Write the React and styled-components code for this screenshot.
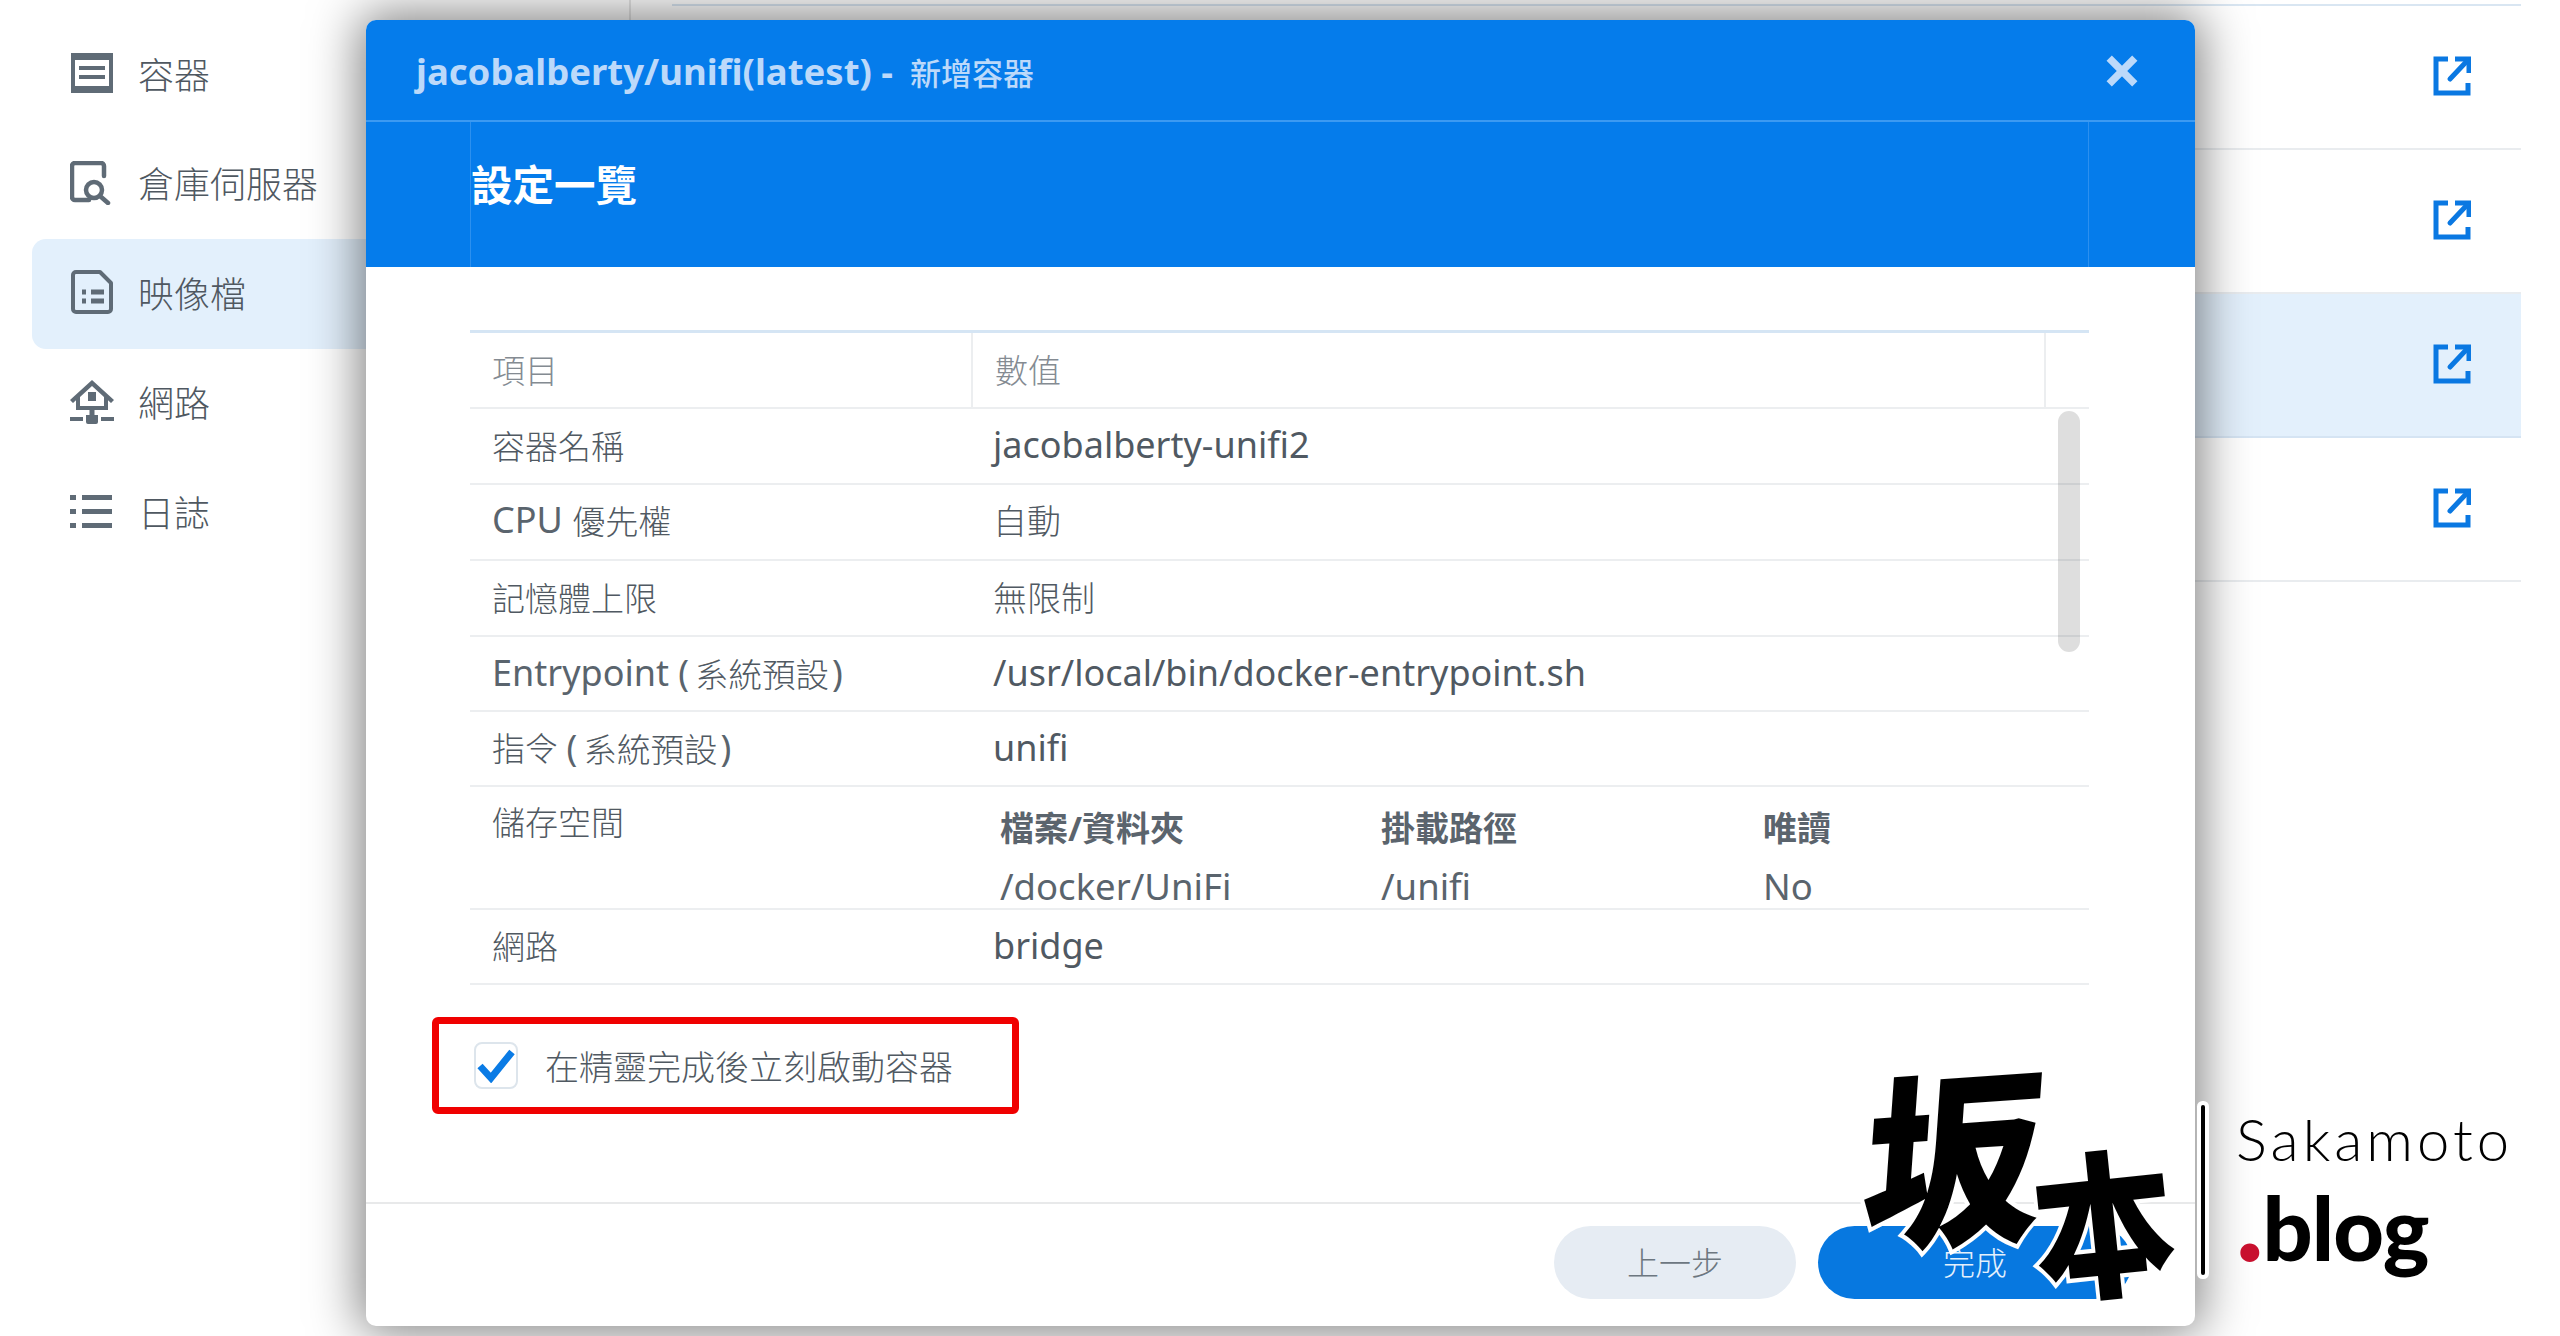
import React from 'react';
import styled, { createGlobalStyle } from 'styled-components';

const Global = createGlobalStyle`
  html, body { margin: 0; padding: 0; background: #fff; }
  body { font-family: "Noto Sans", "Noto Sans CJK TC", sans-serif; }
`;

const Page = styled.div`
  position: relative; width: 2521px; height: 1336px; overflow: hidden;
  display: flex; background: #fff; color: #606a74;
`;
const Side = styled.nav`
  width: 672px; flex: none; padding-top: 20px; box-sizing: border-box;
  display: flex; flex-direction: column;
`;
const NavItem = styled.div`
  width: 400px; height: 109.5px; margin-left: 32px; padding: 0 0 3px 38px; box-sizing: border-box;
  display: flex; align-items: center; gap: 24px;
  font-size: 36px; font-weight: 300; color: #4f5861; border-radius: 14px;
  background: ${p => (p.$active ? '#e3f0fc' : 'transparent')};
`;
const NavIcon = styled.svg`
  width: 44px; height: 44px; flex: none; fill: #5f6b76; stroke: #5f6b76;
`;
const Main = styled.main`
  position: relative; flex: 1; padding-top: 6px;
  &::before { content: ""; position: absolute; left: -43px; top: 0; width: 2px; height: 22px; background: #e6e6e6; }
`;
const ListTop = styled.div`height: 2px; margin-top: -2px; background: #d9e6f2;`;
const ListRow = styled.div`
  height: 144px; box-sizing: border-box; padding: 0 50px 3px 0;
  display: flex; align-items: center; justify-content: flex-end;
  border-bottom: 2px solid ${p => (p.$active ? '#d5e4f3' : '#e9ecef')};
  background: ${p => (p.$active ? '#e3f0fc' : 'transparent')};
`;
const LinkIcon = styled.svg`width: 38px; height: 40px; fill: none; stroke: #0a78e2; stroke-width: 5;`;

const Dialog = styled.section`
  position: absolute; left: 366px; top: 20px; width: 1829px; height: 1306px;
  display: flex; flex-direction: column; background: #fff; border-radius: 10px;
  box-shadow: 0 0 50px 6px rgba(0,0,0,.5);
`;
const TitleBar = styled.header`
  height: 102px; box-sizing: border-box; flex: none; padding: 2px 57px 0 50px;
  display: flex; align-items: center; justify-content: space-between;
  background: #057ceb; border-bottom: 2px solid #3c9af2; border-radius: 10px 10px 0 0;
  color: #bcd9fa; font-size: 36.500px; font-weight: 700;
`;
const DialogTitle = styled.div`display: flex; align-items: center; gap: 17px;`;
const TitleCjk = styled.span`font-size: 31px; font-weight: 500;`;
const Close = styled.svg`width: 32px; height: 32px; stroke: #bcd9fa; stroke-width: 7; fill: none;`;
const SubBar = styled.div`height: 145px; flex: none; padding: 0 106px 0 104px; background: #057ceb;`;
const SubInner = styled.div`
  height: 100%; padding: 0 0 24px 0; box-sizing: border-box; display: flex; align-items: center;
  border-left: 1px solid #2c90ef; border-right: 1px solid #2c90ef;
  color: #fff; font-size: 41.500px; font-weight: 700;
`;
const Body = styled.div`padding: 63px 106px 0 104px;`;
const Table = styled.div`position: relative; border-top: 3px solid #d5e5f4;`;
const Row = styled.div`
  display: flex; height: ${p => p.$h}px; box-sizing: border-box; border-bottom: 2px solid #eceef0;
  font-size: 34px; color: #505962;
`;
const Label = styled.div`
  width: 503px; flex: none; box-sizing: border-box; padding-left: 22px; display: flex;
  align-items: ${p => (p.$top ? 'flex-start' : 'center')};
  padding-top: ${p => (p.$top ? '10px' : '0')};
  padding-bottom: ${p => (p.$top ? 0 : p.$up || 3)}px;
  white-space: pre;
  font-size: 33px; font-weight: 300; color: #505962;
`;
const LatinPart = styled.span`font-size: 36px; font-weight: 400; color: #5a646d;`;
const CjkPart = styled.span`font-size: 33.500px; margin: 0 3px 0 6px;`;
const Value = styled.div`
  flex: 1; padding: 0 0 ${p => p.$up || 3}px 20px; display: flex; align-items: center;
  font-size: ${p => (p.$latin ? 36 : 34)}px; font-weight: ${p => (p.$latin ? 400 : 300)};
`;
const HeadLabel = styled(Label)`color: #848b92; border-right: 2px solid #eceef0;`;
const HeadValue = styled(Value)`
  flex: none; width: 1073px; box-sizing: border-box; padding-left: 22px;
  color: #848b92; font-size: 33px; border-right: 2px solid #eceef0;
`;
const Scroll = styled.div`
  position: absolute; right: 9px; top: 78px; width: 22px; height: 241px;
  border-radius: 11px; background: rgba(0,0,0,.13);
`;
const Sub = styled.div`
  flex: 1; padding: 10px 0 0 27px; display: grid; grid-template-columns: 381px 382px 1fr;
  grid-auto-rows: 59px; align-items: center;
`;
const SubHead = styled.div`font-size: 34px; font-weight: 700; color: #5b646d;`;
const SubCell = styled.div`font-size: 36.500px; color: #5a646d;`;
const Highlight = styled.div`
  width: 587px; height: 97px; box-sizing: border-box; margin: 32px 0 0 -38px; padding-left: 35px;
  display: flex; align-items: center; gap: 27px;
  border: 7px solid #f00000; border-radius: 6px; font-size: 34px; font-weight: 300; color: #505962;
`;
const Check = styled.div`
  width: 44px; height: 47px; box-sizing: border-box; border: 2px solid #dde5ec; border-radius: 8px;
  display: flex; align-items: center; justify-content: center; background: #fff;
`;
const Footer = styled.footer`
  margin-top: auto; height: 124px; box-sizing: border-box; padding: 22px 63px 0 0;
  display: flex; justify-content: flex-end; gap: 22px; border-top: 2px solid #e8e9ea;
`;
const Button = styled.div`
  width: ${p => p.$w}px; height: 73px; border-radius: 37px; padding-bottom: 3px; box-sizing: border-box;
  display: flex; align-items: center; justify-content: center; font-size: 32px; font-weight: 300;
  background: ${p => (p.$primary ? '#0778e0' : '#e6ecf3')};
  color: ${p => (p.$primary ? '#e3f0fc' : '#6d7780')};
`;

const Mark = styled.div`position: absolute; left: 1860px; top: 1060px; width: 660px; height: 250px; pointer-events: none;`;
const Brush = styled.span`
  position: absolute; left: ${p => p.$x}px; top: ${p => p.$y}px; font-size: ${p => p.$s}px; line-height: 1;
  font-family: "Noto Sans CJK TC", sans-serif; font-weight: 900; color: #000;
  -webkit-text-stroke: 8px #fff; paint-order: stroke fill; transform: ${p => p.$t};
`;
const Rule = styled.div`
  position: absolute; left: 341px; top: 45px; width: 4px; height: 170px; background: #000;
  border-radius: 2px; box-shadow: 0 0 0 4px #fff;
`;
const Saka = styled.div`
  position: absolute; left: 376px; top: 50px; font-family: "Lato", sans-serif; font-weight: 300;
  font-size: 58px; line-height: 1; letter-spacing: 4px; color: #000;
`;
const BlogText = styled.div`
  position: absolute; left: 376px; top: 123px; font-family: "Lato", sans-serif; font-weight: 900;
  font-size: 88px; line-height: 1; letter-spacing: -1px; color: #000;
`;
const Dot = styled.span`color: #c8102e; font-size: 116px; line-height: 0;`;

const rows = [
  { k: <>容器名稱</>, v: 'jacobalberty-unifi2', h: 76, latin: true },
  { k: <><LatinPart>CPU </LatinPart>優先權</>, v: '自動', h: 76, up: 5 },
  { k: <>記憶體上限</>, v: '無限制', h: 76 },
  { k: <><LatinPart>Entrypoint (</LatinPart><CjkPart>系統預設</CjkPart><LatinPart>)</LatinPart></>, v: '/usr/local/bin/docker-entrypoint.sh', h: 75, latin: true },
  { k: <>指令 <LatinPart>(</LatinPart><CjkPart>系統預設</CjkPart><LatinPart>)</LatinPart></>, v: 'unifi', h: 75, latin: true },
];

const ContainerIcon = () => (
  <NavIcon viewBox="0 0 44 44" strokeWidth="0">
    <path d="M1 2h42v7H1zM1 35h42v7H1zM1 9h4v26H1zM39 9h4v26h-4zM9 15h26v4H9zM9 24h26v4H9z" />
  </NavIcon>
);
const RegistryIcon = () => (
  <NavIcon viewBox="0 0 44 44" style={{ fill: 'none' }} strokeWidth="4.5" strokeLinecap="round">
    <path d="M19 39H5a3 3 0 0 1-3-3V5a3 3 0 0 1 3-3h26a3 3 0 0 1 3 3v10" />
    <circle cx="24" cy="29" r="8" />
    <path d="M30 35l8 7" />
  </NavIcon>
);
const ImageIcon = () => (
  <NavIcon viewBox="0 0 44 44" strokeWidth="4" style={{ fill: 'none' }} strokeLinejoin="round">
    <path d="M6 2h24l11 11v26a3 3 0 0 1-3 3H6a3 3 0 0 1-3-3V5a3 3 0 0 1 3-3z" />
    <path d="M12 22h4M21 22h13M12 31h4M21 31h13" strokeWidth="5" />
  </NavIcon>
);
const NetIcon = () => (
  <NavIcon viewBox="0 0 44 44" strokeWidth="0">
    <path fillRule="evenodd" d="M22 0l22 20-3 3-3-2.700V30H6v-9.700L3 23l-3-3zM10 17v9h24v-9L22 6zM18 12h8v9h-8z" />
    <path d="M19.500 30h5v5h-5zM16 35h12v7a2 2 0 0 1-2 2h-8a2 2 0 0 1-2-2zM0 37h13v4H0zM31 37h13v4H31z" />
  </NavIcon>
);
const LogIcon = () => (
  <NavIcon viewBox="0 0 44 44" strokeWidth="0">
    <path d="M0 6h6v5H0zM12 6h30v5H12zM0 20h6v5H0zM12 20h30v5H12zM0 34h6v5H0zM12 34h30v5H12z" />
  </NavIcon>
);
const ExternalLink = () => (
  <LinkIcon viewBox="0 0 38 40">
    <path d="M15 3H3v34h32V27" />
    <path d="M22 3h14v14" />
    <path d="M34 5L17 23" strokeLinecap="round" />
  </LinkIcon>
);

export default function App() {
  return (
    <>
      <Global />
      <Page>
        <Side>
          <NavItem><ContainerIcon />容器</NavItem>
          <NavItem><RegistryIcon />倉庫伺服器</NavItem>
          <NavItem $active><ImageIcon />映像檔</NavItem>
          <NavItem><NetIcon />網路</NavItem>
          <NavItem><LogIcon />日誌</NavItem>
        </Side>
        <Main>
          <ListTop />
          <ListRow><ExternalLink /></ListRow>
          <ListRow><ExternalLink /></ListRow>
          <ListRow $active><ExternalLink /></ListRow>
          <ListRow><ExternalLink /></ListRow>
        </Main>

        <Dialog>
          <TitleBar>
            <DialogTitle>jacobalberty/unifi(latest) - <TitleCjk>新增容器</TitleCjk></DialogTitle>
            <Close viewBox="0 0 30 30"><path d="M3 3l24 24M27 3L3 27" /></Close>
          </TitleBar>
          <SubBar><SubInner>設定一覽</SubInner></SubBar>
          <Body>
            <Table>
              <Row $h={76}>
                <HeadLabel>項目</HeadLabel>
                <HeadValue>數值</HeadValue>
              </Row>
              {rows.map(r => (
                <Row key={r.v} $h={r.h}>
                  <Label $up={r.up}>{r.k}</Label>
                  <Value $latin={r.latin} $up={r.up}>{r.v}</Value>
                </Row>
              ))}
              <Row $h={123}>
                <Label $top>儲存空間</Label>
                <Sub>
                  <SubHead>檔案/資料夾</SubHead>
                  <SubHead>掛載路徑</SubHead>
                  <SubHead>唯讀</SubHead>
                  <SubCell>/docker/UniFi</SubCell>
                  <SubCell>/unifi</SubCell>
                  <SubCell>No</SubCell>
                </Sub>
              </Row>
              <Row $h={75}><Label>網路</Label><Value $latin>bridge</Value></Row>
              <Scroll />
            </Table>
            <Highlight>
              <Check>
                <svg width="38" height="34" viewBox="0 0 38 34" fill="none" stroke="#0a7be5" strokeWidth="7">
                  <path d="M3 17l11 12L35 3" />
                </svg>
              </Check>
              在精靈完成後立刻啟動容器
            </Highlight>
          </Body>
          <Footer>
            <Button $w={242}>上一步</Button>
            <Button $w={314} $primary>完成</Button>
          </Footer>
        </Dialog>

        <Mark>
          <Brush $x={4} $y={0} $s={180} $t="rotate(-4deg) skewX(-8deg) scale(1,1.05)">坂</Brush>
          <Brush $x={168} $y={82} $s={150} $t="rotate(-6deg) scale(.95,1.05)">本</Brush>
          <Rule />
          <Saka>Sakamoto</Saka>
          <BlogText><Dot>.</Dot>blog</BlogText>
        </Mark>
      </Page>
    </>
  );
}
